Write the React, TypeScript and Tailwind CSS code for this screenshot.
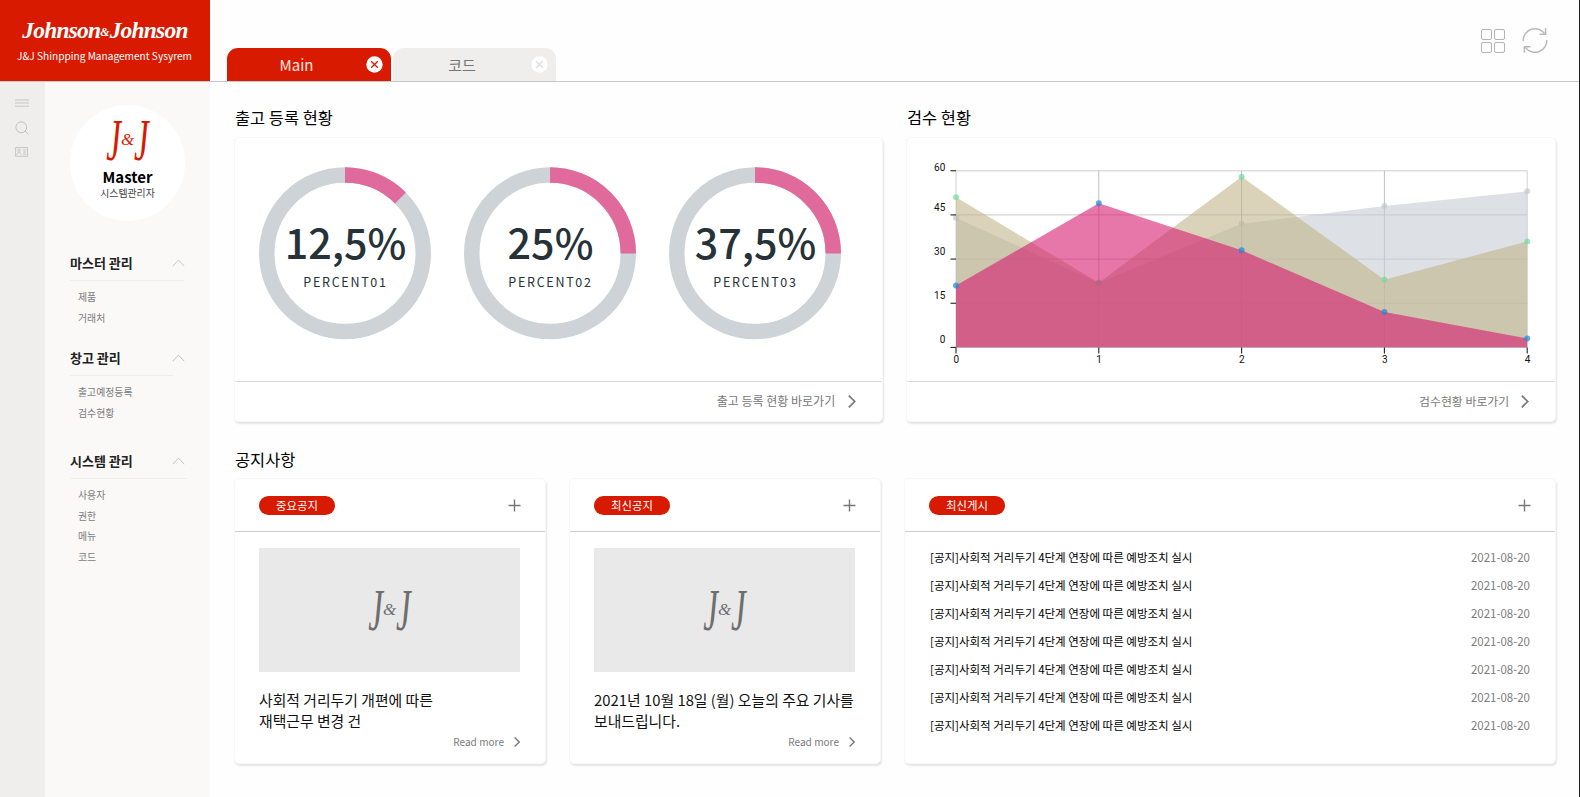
import React from "react";

const MENU = [
  { title: "마스터 관리", items: ["제품", "거래처"], box: "h-[95px]", rule: "w-[114px]" },
  { title: "창고 관리", items: ["출고예정등록", "검수현황"], box: "h-[103px]", rule: "w-[103px]" },
  { title: "시스템 관리", items: ["사용자", "권한", "메뉴", "코드"], box: "h-[140px]", rule: "w-[117px]" },
];

const GAUGES = [
  { value: "12,5%", label: "PERCENT01", share: 0.125 },
  { value: "25%", label: "PERCENT02", share: 0.25 },
  { value: "37,5%", label: "PERCENT03", share: 0.25 },
];

const POSTS = Array.from({ length: 7 }, () => ({
  title: "[공지]사회적 거리두기 4단계 연장에 따른 예방조치 실시",
  date: "2021-08-20",
}));

const CARD =
  "flex flex-col rounded-[5px] bg-white border border-[#f7f7f7] shadow-[1px_2px_2px_rgba(0,0,0,0.1)]";

function Monogram({ className }: { className: string }) {
  return (
    <div
      className={`flex h-[44px] w-[46px] items-center justify-center italic ${className}`}
      style={{ fontFamily: '"Liberation Serif", serif' }}
    >
      <span className="inline-block scale-y-[1.8] text-[33px] leading-[24px]">J</span>
      <span className="inline-block text-[17px] leading-[20px]">&amp;</span>
      <span className="inline-block scale-y-[1.8] text-[33px] leading-[24px]">J</span>
    </div>
  );
}

function Wordmark() {
  return (
    <div
      className="flex h-[30px] items-center text-[23.5px] leading-[30px] font-bold whitespace-nowrap italic"
      style={{ fontFamily: '"Liberation Serif", serif' }}
    >
      <span className="tracking-[-0.8px]">Johnson</span>
      <span className="pt-[3px] text-[12px]">&amp;</span>
      <span className="tracking-[-0.8px]">Johnson</span>
    </div>
  );
}

function CloseDot({ className }: { className: string }) {
  return (
    <svg width="17" height="17" viewBox="0 0 17 17" className={className}>
      <circle cx="8.5" cy="8.5" r="8.2" fill="#fff" />
      <path d="M5.2 5.2l6.6 6.6M11.8 5.2l-6.6 6.6" stroke="currentColor" strokeWidth="1.3" />
    </svg>
  );
}

function Chevron({ size }: { size: number }) {
  return (
    <svg width={size * 0.6} height={size} viewBox="0 0 6 10" fill="none" stroke="#777" strokeWidth="1.3">
      <path d="M.6 .5 5.2 5 .6 9.5" />
    </svg>
  );
}

function Header() {
  return (
    <header className="flex h-[82px] shrink-0 border-b border-[#c9c9c9]">
      <div className="flex w-[210px] shrink-0 flex-col items-center bg-[#d71a00] pt-[15px] text-white">
        <Wordmark />
        <div className="mt-[2px] h-[18px] whitespace-nowrap pr-px text-[10.15px] leading-[18px]">
          J&amp;J Shinpping Management Sysyrem
        </div>
      </div>
      <nav className="flex flex-1 items-end gap-[2px] pl-[17px]">
        <div className="flex h-[33px] w-[164px] items-center rounded-t-[11px] bg-[#d71a00] pr-[8px]">
          <span className="w-[139px] text-center text-[15px] leading-5 text-white/90">Main</span>
          <CloseDot className="text-[#d71a00]" />
        </div>
        <div className="flex h-[33px] w-[163px] items-center rounded-t-[11px] bg-[#efeeed] pr-[8px]">
          <span className="w-[138px] text-center text-[15px] leading-5 text-[#777]">코드</span>
          <CloseDot className="text-[#dcdcdc]" />
        </div>
      </nav>
      <div className="flex gap-[15px] pt-[27px] pr-[31px]">
        <svg width="26" height="28" viewBox="0 0 26 28" fill="none" stroke="#b4b4b4" strokeWidth="1">
          <rect x=".5" y="2.5" width="10" height="10" rx="1.5" />
          <rect x="13.5" y="2.5" width="10" height="10" rx="1.5" />
          <rect x=".5" y="15.5" width="10" height="10" rx="1.5" />
          <rect x="13.5" y="15.5" width="10" height="10" rx="1.5" />
        </svg>
        <svg width="26" height="28" viewBox="0 0 26 28" fill="none" stroke="#b8b8b8" strokeWidth="1.5">
          <path d="M1.2 14A11.8 11.8 0 0 1 22.6 6.6M24.8 13A11.8 11.8 0 0 1 3.4 20.4" />
          <path d="M23.6 1v6.3h-6M2.4 25.8v-6h6" />
        </svg>
      </div>
    </header>
  );
}

function IconRail() {
  return (
    <div className="flex w-[45px] shrink-0 flex-col items-center bg-[#efeeec] pt-[17px] pr-[2px]">
      <svg width="14" height="8" viewBox="0 0 14 8" stroke="#c6c5c3" strokeWidth="1">
        <path d="M0 1h14M0 4h14M0 7.2h14" />
      </svg>
      <svg width="14" height="14" viewBox="0 0 14 14" className="mt-[14px]" fill="none" stroke="#c2c1bf" strokeWidth="1">
        <circle cx="6.3" cy="6.3" r="5.4" />
        <path d="M10 10l3.4 3.2" />
      </svg>
      <svg width="13" height="10" viewBox="0 0 13 10" className="mt-[12px]" fill="none" stroke="#c2c1bf" strokeWidth="0.9">
        <rect x=".6" y=".6" width="11.8" height="8.6" />
        <circle cx="4" cy="3.4" r="1.1" />
        <path d="M1.8 7.6c.3-2.6 4.2-2.6 4.5 0M8 3h3M8 5h3M8 7h3" />
      </svg>
    </div>
  );
}

function Sidebar() {
  return (
    <aside className="flex w-[165px] shrink-0 flex-col bg-[#faf9f8] pl-[25px]">
      <div className="mt-[23px] flex h-[116px] w-[115px] shrink-0 flex-col items-center rounded-full bg-white pt-[13px]">
        <Monogram className="text-[#d71a00]" />
        <div className="mt-[5px] h-[20px] text-[15px] leading-5 font-bold text-black">Master</div>
        <div className="mt-[-1px] h-[14px] text-[9.9px] leading-[14px] text-[#444]">시스템관리자</div>
      </div>
      <div className="pt-[33px]">
        {MENU.map((group) => (
          <section key={group.title} className={group.box}>
            <div className="flex h-[18px] w-[115px] items-center justify-between">
              <h3 className="text-[13px] leading-[18px] font-bold text-[#222]">{group.title}</h3>
              <svg width="13" height="8" viewBox="0 0 13 8" fill="none" stroke="#c4c4c4" strokeWidth="1">
                <path d="M.8 7.2 6.5 1l5.7 6.2" />
              </svg>
            </div>
            <div className={`mt-[8px] h-px bg-[#efeeee] ${group.rule}`} />
            <ul className="pt-[6px] pl-[8px]">
              {group.items.map((item) => (
                <li key={item} className="h-[20.5px] text-[9.9px] leading-[20.5px] text-[#7c7c7c]">
                  {item}
                </li>
              ))}
            </ul>
          </section>
        ))}
      </div>
    </aside>
  );
}

function Gauge({ value, label, share }: { value: string; label: string; share: number }) {
  const radius = 78.25;
  const length = 2 * Math.PI * radius;
  return (
    <svg width="174" height="174" viewBox="0 0 174 174" className="shrink-0">
      <circle cx="87" cy="87.3" r={radius} fill="none" stroke="#ced3d7" strokeWidth="15.5" />
      <circle
        cx="87"
        cy="87.3"
        r={radius}
        fill="none"
        stroke="#e06a9c"
        strokeWidth="15.5"
        strokeDasharray={`${length * share} ${length}`}
        transform="rotate(-90 87 87.3)"
      />
      <text x="87.5" y="93.4" textAnchor="middle" fontSize="41.3" fontWeight="500" fill="#263238">
        {value}
      </text>
      <text x="87.5" y="121" textAnchor="middle" fontSize="12.5" letterSpacing="1.7" fill="#263238">
        {label}
      </text>
    </svg>
  );
}

const SERIES = [
  { area: "#c5cad2", dot: "#c3c8cf", values: [44, 22, 42, 48, 53] },
  { area: "#c0b48a", dot: "#6fdc98", values: [51, 22, 58, 23, 36] },
  { area: "#d7176c", dot: "#1f86d6", values: [21, 49, 33, 12, 3] },
];

const px = (i: number) => 49 + i * 142.8;
const py = (v: number) => 209.4 - v * 2.944;

function AreaChart() {
  return (
    <svg width="646" height="241" viewBox="0 0 646 241" fontFamily="Roboto, sans-serif">
      {[15, 30, 45].map((v) => (
        <path key={v} d={`M49 ${py(v)}H${px(4)}`} stroke="#cacace" strokeWidth="1" />
      ))}
      <path d={`M49 ${py(60)}H${px(4)}`} stroke="#dedede" strokeWidth="1.6" />
      {[0, 1, 2, 3, 4].map((i) => (
        <path
          key={i}
          d={`M${px(i)} ${py(60)}V${py(0)}`}
          stroke={i === 0 || i === 4 ? "#d2d2d4" : "#c0bec0"}
          strokeWidth="1"
        />
      ))}
      {SERIES.map((s) => (
        <g key={s.area}>
          <polygon
            points={`${px(0)},${py(0)} ${s.values.map((v, i) => `${px(i)},${py(v)}`).join(" ")} ${px(4)},${py(0)}`}
            fill={s.area}
            fillOpacity="0.59"
          />
          {s.values.map((v, i) => (
            <circle key={i} cx={px(i)} cy={py(v)} r="3" fill={s.dot} fillOpacity="0.7" />
          ))}
        </g>
      ))}
      <path d={`M49 ${py(0)}H${px(4)}`} stroke="#c9a0b0" strokeWidth="0.8" />
      {[0, 15, 30, 45, 60].map((v) => (
        <g key={v}>
          <path d={`M43.5 ${py(v)}H49`} stroke="#222" strokeWidth="1.1" />
          <text x="38.3" y={py(v) - (v === 60 ? 0 : 4)} textAnchor="end" fontSize="10" fill="#111">
            {v}
          </text>
        </g>
      ))}
      {[0, 1, 2, 3, 4].map((i) => (
        <g key={i}>
          <path d={`M${px(i)} ${py(0)}v6`} stroke="#222" strokeWidth="1.1" />
          <text x={px(i) + 0.3} y="225.3" textAnchor="middle" fontSize="10" fill="#111">
            {i}
          </text>
        </g>
      ))}
    </svg>
  );
}

function CardFooter({ label, spacing }: { label: string; spacing: string }) {
  return (
    <div
      className={`flex h-[40px] items-center justify-end border-t border-[#dcdfe0] pb-px text-[#777] ${spacing}`}
    >
      <span>{label}</span>
      <Chevron size={13} />
    </div>
  );
}

function CardHead({ label }: { label: string }) {
  return (
    <div className="flex h-[53px] shrink-0 items-center justify-between border-b border-[#cfcfcf] pt-px pr-[24px] pl-[24px]">
      <span className="flex h-[19px] w-[76px] items-center justify-center rounded-full bg-[#d71a00] text-[11.4px] leading-[19px] text-white">
        {label}
      </span>
      <svg width="13" height="13" viewBox="0 0 13 13" stroke="#777" strokeWidth="1.4">
        <path d="M6.5 .5v12M.5 6.5h12" />
      </svg>
    </div>
  );
}

function NewsCard({ label, lines }: { label: string; lines: string[] }) {
  return (
    <article className={`${CARD} h-[286px] w-[312px]`}>
      <CardHead label={label} />
      <div className="flex flex-1 flex-col pt-[16px] pr-[25px] pl-[24px]">
        <div className="flex h-[124px] shrink-0 items-center justify-center bg-[#e9e9e9]">
          <Monogram className="text-[#6e6e6e]" />
        </div>
        <div className="mt-[17px] text-[14.85px] leading-[21.4px] whitespace-nowrap text-[#111]">
          {lines.map((line) => (
            <p key={line}>{line}</p>
          ))}
        </div>
        <div className="mt-[2px] flex h-[16px] items-center justify-end gap-[10px] text-[10.1px] leading-4 text-[#7c7c7c]">
          <span>Read more</span>
          <Chevron size={10} />
        </div>
      </div>
    </article>
  );
}

const HEADING = "h-[24px] pl-px text-[16.4px] leading-6 font-normal text-black";

export default function App() {
  return (
    <div
      className="flex h-[797px] w-[1580px] flex-col overflow-hidden border-r border-[#222] bg-[#fefefe] text-black"
      style={{ fontFamily: '"Noto Sans CJK KR", "Noto Sans", sans-serif' }}
    >
      <Header />
      <div className="flex min-h-0 flex-1">
        <IconRail />
        <Sidebar />
        <main className="flex flex-1 flex-col pt-[23px] pl-[24px]">
          <div className="flex gap-[23px]">
            <section className="w-[649px]">
              <h2 className={HEADING}>출고 등록 현황</h2>
              <div className={`${CARD} mt-[8px] h-[285px]`}>
                <div className="flex flex-1 gap-[31px] pt-[28px] pl-[23px]">
                  {GAUGES.map((g) => (
                    <Gauge key={g.label} {...g} />
                  ))}
                </div>
                <CardFooter label="출고 등록 현황 바로가기" spacing="gap-[13px] pr-[26px] text-[12px]" />
              </div>
            </section>
            <section className="w-[650px]">
              <h2 className={HEADING}>검수 현황</h2>
              <div className={`${CARD} mt-[8px] h-[285px]`}>
                <div className="flex-1">
                  <AreaChart />
                </div>
                <CardFooter label="검수현황 바로가기" spacing="gap-[12px] pr-[26px] text-[11.9px]" />
              </div>
            </section>
          </div>
          <h2 className={`${HEADING} mt-[25px]`}>공지사항</h2>
          <div className="mt-[7px] flex gap-[23px]">
            <NewsCard label="중요공지" lines={["사회적 거리두기 개편에 따른", "재택근무 변경 건"]} />
            <NewsCard
              label="최신공지"
              lines={["2021년 10월 18일 (월) 오늘의 주요 기사를", "보내드립니다."]}
            />
            <article className={`${CARD} h-[286px] w-[652px]`}>
              <CardHead label="최신게시" />
              <ul className="pt-[11px] pr-[25px] pl-[25px]">
                {POSTS.map((post, i) => (
                  <li key={i} className="flex h-[28px] items-center justify-between text-[11.5px] leading-7">
                    <span className="text-black">{post.title}</span>
                    <span className="text-[#7c7c7c]">{post.date}</span>
                  </li>
                ))}
              </ul>
            </article>
          </div>
        </main>
      </div>
    </div>
  );
}
